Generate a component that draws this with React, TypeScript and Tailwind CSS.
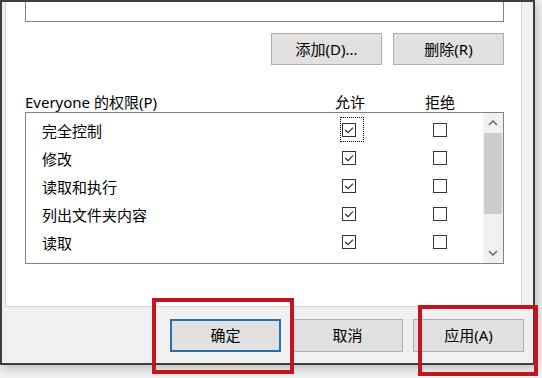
import React from "react";

const perms = ["完全控制", "修改", "读取和执行", "列出文件夹内容", "读取", "特殊权限"];

const CheckBox = ({ checked }: { checked: boolean }) => (
  <span className="flex h-[14px] w-[14px] shrink-0 items-center justify-center border border-[#333333] bg-white">
    {checked && (
      <svg width="12" height="12" viewBox="0 0 12 12">
        <path d="M2.3 6 L5 8.7 L10 3.6" fill="none" stroke="#2e2e2e" strokeWidth="1.3" />
      </svg>
    )}
  </span>
);

const Chevron = ({ down }: { down?: boolean }) => (
  <svg width="10" height="6" viewBox="0 0 10 6">
    <path
      d={down ? "M1 1 L5 5 L9 1" : "M1 5 L5 1 L9 5"}
      fill="none"
      stroke="#606060"
      strokeWidth="1.4"
    />
  </svg>
);

const App = () => {
  return (
    <div className="relative h-[378px] w-[542px] overflow-hidden bg-[#f0f0f0] font-['Noto_Sans','Noto_Sans_CJK_SC',sans-serif] text-[15px] text-black">
      {/* dialog window */}
      <div className="flex h-[365px] w-[535px] flex-col border-2 border-[#3d3d3d] bg-[#f0f0f0] pl-[3px] shadow-[2px_3px_9px_rgba(0,0,0,0.22)]">
        {/* tab page */}
        <div className="flex h-[305px] w-[517px] shrink-0 flex-col border-x border-b border-[#d2d2d2] bg-white pl-[19px]">
          {/* group list (scrolled) */}
          <div className="h-[20px] w-[479px] border-x border-b border-[#828282]" />

          <div className="mt-[11px] flex w-[479px] justify-end gap-[11px]">
            <button className="flex h-[32px] w-[111px] items-center justify-center border border-[#adadad] bg-[#e1e1e1]">
              添加(D)...
            </button>
            <button className="flex h-[32px] w-[111px] items-center justify-center border border-[#adadad] bg-[#e1e1e1]">
              删除(R)
            </button>
          </div>

          {/* header */}
          <div className="mt-[27px] flex h-[20px] items-center">
            <span className="w-[305px]">Everyone 的权限(P)</span>
            <span className="w-[40px] text-center">允许</span>
            <span className="ml-[50px] w-[40px] text-center">拒绝</span>
          </div>

          {/* permission list */}
          <div className="flex h-[152px] w-[479px] overflow-hidden border border-[#828282]">
            <div className="flex-1 pt-[4px]">
              {perms.map((p, i) => (
                <div key={p} className="flex h-[28px] items-center">
                  <span className="w-[314px] pl-[16px] leading-[20px]">{i < 5 ? p : ""}</span>
                  <span
                    className={
                      i === 0
                        ? "mb-[3px] flex h-[25px] w-[24px] items-center border border-dotted border-black pl-[1px]"
                        : "mb-[3px] flex h-[25px] w-[24px] items-center border border-transparent pl-[1px]"
                    }
                  >
                    <CheckBox checked />
                  </span>
                  <span className="mb-[3px] ml-[69px]">
                    <CheckBox checked={false} />
                  </span>
                </div>
              ))}
            </div>
            {/* scrollbar */}
            <div className="flex w-[20px] flex-col bg-[#f0f0f0]">
              <div className="flex h-[20px] items-center justify-center">
                <Chevron />
              </div>
              <div className="mx-[1px] h-[81px] bg-[#cdcdcd]" />
              <div className="flex-1" />
              <div className="flex h-[20px] items-center justify-center">
                <Chevron down />
              </div>
            </div>
          </div>
        </div>

        {/* dialog buttons */}
        <div className="mt-[12px] flex justify-end gap-[10px] pr-[9px]">
          <button className="mr-[1px] flex h-[33px] w-[111px] items-center justify-center border-2 border-[#2a70ab] bg-[#e1e1e1]">
            确定
          </button>
          <button className="flex h-[33px] w-[111px] items-center justify-center border border-[#adadad] bg-[#e1e1e1]">
            取消
          </button>
          <button className="flex h-[33px] w-[111px] items-center justify-center border border-[#adadad] bg-[#e1e1e1]">
            应用(A)
          </button>
        </div>
      </div>

      {/* red highlight marks */}
      <div className="absolute left-[152px] top-[298px] h-[76px] w-[142px] border-[4px] border-[#c2151d]" />
      <div className="absolute left-[418px] top-[305px] h-[71px] w-[120px] border-[4px] border-[#c2151d]" />
    </div>
  );
};

export default App;
